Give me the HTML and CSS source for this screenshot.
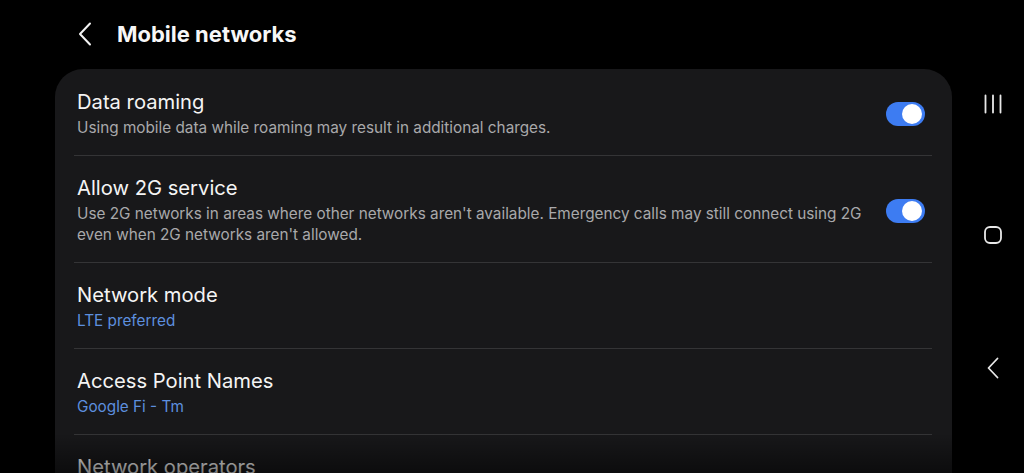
FILE: index.html
```html
<!DOCTYPE html>
<html>
<head>
<meta charset="utf-8">
<link rel="stylesheet" href="styles.css">
</head>
<body>
<div class="main">
  <header class="header">
    <svg class="back" width="16" height="24" viewBox="0 0 16 24"><path d="M13 1.5 L3 12 L13 22.5" fill="none" stroke="#f2f2f2" stroke-width="2" stroke-linecap="round" stroke-linejoin="round"/></svg>
    <h1 class="title">Mobile networks</h1>
  </header>
  <section class="card">
    <div class="row">
      <div class="text">
        <div class="row-title">Data roaming</div>
        <div class="row-sub">Using mobile data while roaming may result in additional charges.</div>
      </div>
      <div class="toggle"><span class="knob"></span></div>
    </div>
    <div class="row">
      <div class="text">
        <div class="row-title">Allow 2G service</div>
        <div class="row-sub">Use 2G networks in areas where other networks aren't available. Emergency calls may still connect using 2G even when 2G networks aren't allowed.</div>
      </div>
      <div class="toggle"><span class="knob"></span></div>
    </div>
    <div class="row">
      <div class="text">
        <div class="row-title">Network mode</div>
        <div class="row-sub link">LTE preferred</div>
      </div>
    </div>
    <div class="row">
      <div class="text">
        <div class="row-title">Access Point Names</div>
        <div class="row-sub link">Google Fi - Tm</div>
      </div>
    </div>
    <div class="row last">
      <div class="text">
        <div class="row-title">Network operators</div>
      </div>
    </div>
    <div class="fade"></div>
  </section>
</div>
<nav class="nav">
  <svg width="20" height="20" viewBox="0 0 20 20"><path d="M2.5 1.5 V18.5 M10 1.5 V18.5 M17.5 1.5 V18.5" stroke="#e8e8e8" stroke-width="1.8" stroke-linecap="round"/></svg>
  <svg width="20" height="20" viewBox="0 0 20 20"><rect x="2" y="2" width="16" height="16" rx="5" fill="none" stroke="#e8e8e8" stroke-width="1.8"/></svg>
  <svg width="16" height="24" viewBox="0 0 16 24"><path d="M12.5 2.5 L3.5 12 L12.5 21.5" fill="none" stroke="#e8e8e8" stroke-width="1.8" stroke-linecap="round" stroke-linejoin="round"/></svg>
</nav>
</body>
</html>
```
FILE: styles.css
```css
html, body {
  margin: 0;
  padding: 0;
  background: #000;
  height: 473px;
  overflow: hidden;
}
body {
  display: flex;
  font-family: Inter, Roboto, "Noto Sans", sans-serif;
  color: #f5f5f5;
}
.main {
  flex: 1;
  display: flex;
  flex-direction: column;
  min-height: 0;
}
.header {
  height: 69px;
  flex-shrink: 0;
  display: flex;
  align-items: center;
  padding-left: 77px;
  box-sizing: border-box;
  padding-bottom: 2px;
}
.back {
  margin-right: 24px;
}
.title {
  margin: 0;
  font-size: 22px;
  font-weight: 700;
  color: #f7f7f7;
}
.card {
  position: relative;
  margin-left: 55px;
  margin-right: 8px;
  background: #18181a;
  border-radius: 28px 28px 0 0;
  padding: 1px 20px 0 19px;
  flex: 1 0 auto;
}
.row {
  display: flex;
  align-items: center;
  border-bottom: 1px solid #343436;
  padding: 20px 7px 17px 3px;
}
.row.last {
  border-bottom: none;
}
.text {
  flex: 1;
  min-width: 0;
}
.row-title {
  font-size: 20.2px;
  line-height: 24px;
  color: #f4f4f4;
}
.row-sub {
  margin-top: 3px;
  font-size: 15.3px;
  line-height: 21px;
  color: #a9a9ab;
  padding-right: 14px;
}
.row-sub.link {
  color: #5d8fdf;
}
.toggle {
  width: 39px;
  height: 24px;
  border-radius: 12px;
  background: #3d7cf2;
  position: relative;
  flex-shrink: 0;
}
.knob {
  position: absolute;
  right: 3px;
  top: 2px;
  width: 20px;
  height: 20px;
  border-radius: 50%;
  background: #fff;
}
.fade {
  position: absolute;
  left: -1px;
  right: -1px;
  top: 364px;
  bottom: 0;
  background: linear-gradient(to bottom, rgba(0,0,0,0) 0%, rgba(0,0,0,0.55) 70%, rgba(0,0,0,0.85) 100%);
}
.nav {
  width: 64px;
  display: flex;
  flex-direction: column;
  align-items: center;
  padding-top: 94px;
  padding-left: 2px;
  box-sizing: border-box;
  gap: 111px;
}
```
